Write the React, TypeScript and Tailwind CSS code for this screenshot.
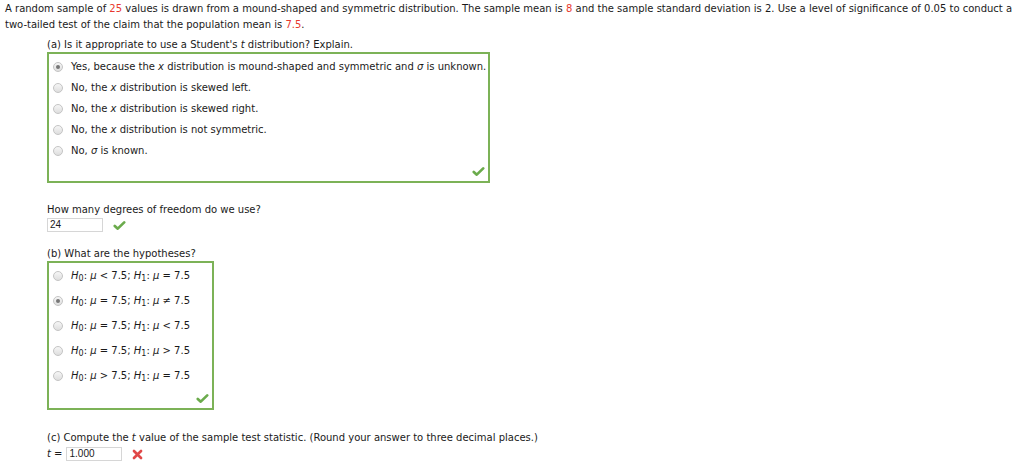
import type { ReactNode } from "react";

const font = { fontFamily: '"DejaVu Sans", Verdana, sans-serif' };
const inputFont = { fontFamily: '"Liberation Sans", Arial, sans-serif' };

function Radio({ checked }: { checked?: boolean }) {
  return (
    <span className="flex h-[10px] w-[10px] shrink-0 items-center justify-center rounded-full border border-[#c4c4c4] bg-gradient-to-b from-[#f6f6f6] to-[#dedede]">
      {checked && <span className="h-[4px] w-[4px] rounded-full bg-[#777]" />}
    </span>
  );
}

function Check() {
  return (
    <svg viewBox="0 0 16 14" className="h-[11px] w-[13px]" aria-hidden>
      <path
        d="M2 7.5 L5.8 11 L14 3"
        fill="none"
        stroke="#6bab4c"
        strokeWidth="3.4"
        strokeLinecap="round"
        strokeLinejoin="round"
      />
    </svg>
  );
}

function Cross() {
  return (
    <svg viewBox="0 0 14 14" className="h-[11px] w-[11px]" aria-hidden>
      <path
        d="M2.5 2.5 L11.5 11.5 M11.5 2.5 L2.5 11.5"
        fill="none"
        stroke="#e04848"
        strokeWidth="3.4"
        strokeLinecap="round"
      />
    </svg>
  );
}

function Red({ children }: { children: ReactNode }) {
  return <span className="text-[#e8382e]">{children}</span>;
}

function Option({ checked, h, children }: { checked?: boolean; h: string; children: ReactNode }) {
  return (
    <div className={`flex items-center gap-[8px] whitespace-nowrap pl-[4px] ${h}`}>
      <Radio checked={checked} />
      <span>{children}</span>
    </div>
  );
}

function Hyp({ a, b }: { a: string; b: string }) {
  return (
    <>
      <i>H</i>
      <sub className="text-[8px] leading-none">0</sub>: <i>μ</i> {a}; <i>H</i>
      <sub className="text-[8px] leading-none">1</sub>: <i>μ</i> {b}
    </>
  );
}

export default function App() {
  return (
    <div className="bg-white px-[5px] pt-[1px] text-[10px] leading-[16px] text-[#1a1a1a]" style={font}>
      <p>
        A random sample of <Red>25</Red> values is drawn from a mound-shaped and symmetric distribution. The
        sample mean is <Red>8</Red> and the sample standard deviation is 2. Use a level of significance of 0.05 to
        conduct a two-tailed test of the claim that the population mean is <Red>7.5</Red>.
      </p>

      <div className="ml-[42px] mt-[4px]">
        <p>(a) Is it appropriate to use a Student's <i>t</i> distribution? Explain.</p>
        <div className="mt-[-1px] w-[443px] border-2 border-[#7cb257] pt-[2px]">
          <Option checked h="h-[21px]">
            Yes, because the <i>x</i> distribution is mound-shaped and symmetric and <i>σ</i> is unknown.
          </Option>
          <Option h="h-[21px]">
            No, the <i>x</i> distribution is skewed left.
          </Option>
          <Option h="h-[21px]">
            No, the <i>x</i> distribution is skewed right.
          </Option>
          <Option h="h-[21px]">
            No, the <i>x</i> distribution is not symmetric.
          </Option>
          <Option h="h-[21px]">
            No, <i>σ</i> is known.
          </Option>
          <div className="flex h-[20px] items-center justify-end pr-[3px]">
            <Check />
          </div>
        </div>

        <p className="mt-[19px]">How many degrees of freedom do we use?</p>
        <div className="flex items-center gap-[10px]">
          <span className="flex h-[14px] w-[56px] items-center border border-[#d6d6d6] pl-[2px] text-[10px]" style={inputFont}>
            24
          </span>
          <Check />
        </div>

        <p className="mt-[14px]">(b) What are the hypotheses?</p>
        <div className="mt-[-1px] w-[167px] border-2 border-[#7cb257]">
          <Option h="h-[25px]">
            <Hyp a="< 7.5" b="= 7.5" />
          </Option>
          <Option checked h="h-[25px]">
            <Hyp a="= 7.5" b="≠ 7.5" />
          </Option>
          <Option h="h-[25px]">
            <Hyp a="= 7.5" b="< 7.5" />
          </Option>
          <Option h="h-[25px]">
            <Hyp a="= 7.5" b="> 7.5" />
          </Option>
          <Option h="h-[25px]">
            <Hyp a="> 7.5" b="= 7.5" />
          </Option>
          <div className="flex h-[20px] items-center justify-end pr-[3px]">
            <Check />
          </div>
        </div>

        <p className="mt-[20px]">
          (c) Compute the <i>t</i> value of the sample test statistic. (Round your answer to three decimal places.)
        </p>
        <div className="flex items-center gap-[4px]">
          <span>
            <i>t</i> =
          </span>
          <span className="flex h-[14px] w-[56px] items-center border border-[#d6d6d6] pl-[2px] text-[10px]" style={inputFont}>
            1.000
          </span>
          <span className="ml-[6px]">
            <Cross />
          </span>
        </div>
      </div>
    </div>
  );
}
